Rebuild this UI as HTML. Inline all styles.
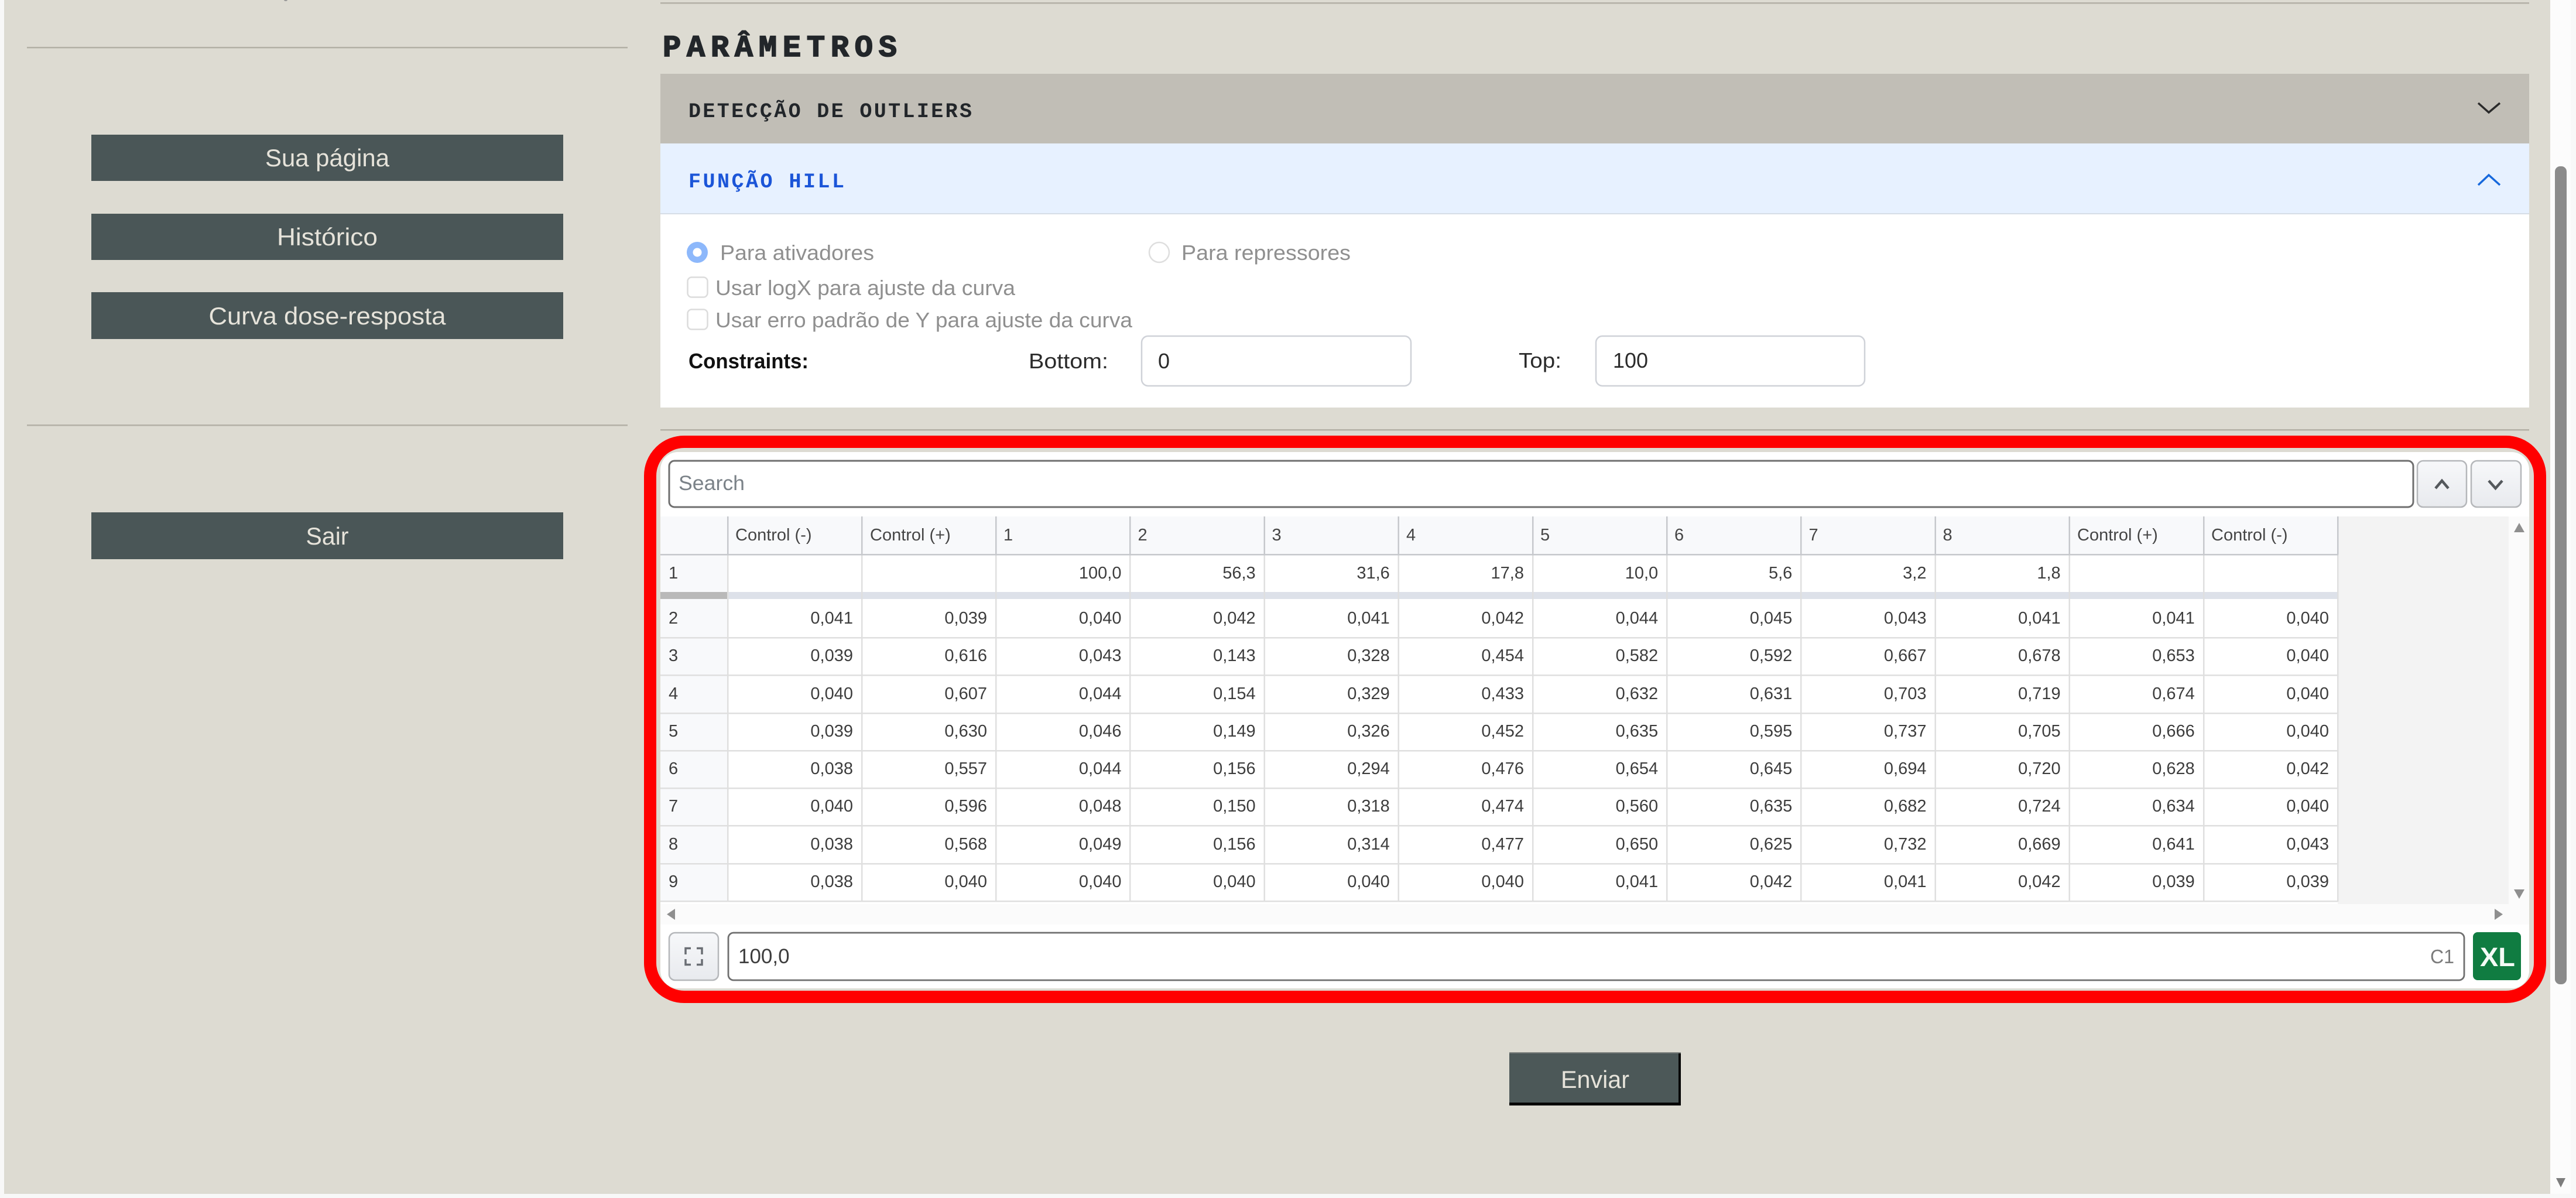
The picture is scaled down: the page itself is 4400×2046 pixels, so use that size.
<!DOCTYPE html>
<html lang="pt">
<head>
<meta charset="utf-8">
<title>Parâmetros</title>
<style>
html,body{margin:0;padding:0;width:4400px;height:2046px;overflow:hidden;background:#dddbd2}
svg{display:block}
text{font-family:"Liberation Sans",Arial,sans-serif}
.side{font-size:42px;fill:#e6e3da;text-anchor:middle}
.pix{font-family:"Liberation Mono","DejaVu Sans Mono",monospace;font-weight:700}
.lab{font-size:36px;fill:#8f8f8f}
.blk{font-size:36px;fill:#2b2b2b}
.tb{font-size:29px;fill:#3d3d3d}
.hd{font-size:29px;fill:#454545}
.num{font-size:29px;fill:#3d3d3d;text-anchor:end;transform:translateX(2px)}
</style>
</head>
<body>
<svg xmlns="http://www.w3.org/2000/svg" width="4400" height="2046" viewBox="0 0 4400 2046">
<defs>
<linearGradient id="btn" x1="0" y1="0" x2="0" y2="1"><stop offset="0" stop-color="#f7f8fa"/><stop offset="1" stop-color="#e8eaee"/></linearGradient>
</defs>
<!-- page frame -->
<rect x="0" y="0" width="4400" height="2046" fill="#f8f8f8"/>
<rect x="7" y="0" width="4349" height="2039" fill="#dddbd2"/>
<rect x="4356" y="0" width="35" height="2039" fill="#fcfcfc"/>
<rect x="4364" y="284" width="20" height="1397" rx="9" fill="#8b8b8b"/>
<path d="M4366 2012h16l-8 16z" fill="#7d7d7d"/>

<!-- sidebar -->
<ellipse cx="488" cy="0" rx="3" ry="2" fill="#999"/>
<rect x="46" y="80" width="1026" height="2.5" fill="#b3b0a6"/>
<rect x="46" y="725" width="1026" height="2.5" fill="#b3b0a6"/>
<rect x="156" y="230" width="806" height="79" fill="#4a5657"/>
<rect x="156" y="365" width="806" height="79" fill="#4a5657"/>
<rect x="156" y="499" width="806" height="80" fill="#4a5657"/>
<rect x="156" y="875" width="806" height="80" fill="#4a5657"/>
<text class="side" x="559" y="284" textLength="212" lengthAdjust="spacingAndGlyphs">Sua página</text>
<text class="side" x="559" y="419" textLength="172" lengthAdjust="spacingAndGlyphs">Histórico</text>
<text class="side" x="559" y="554" textLength="405" lengthAdjust="spacingAndGlyphs">Curva dose-resposta</text>
<text class="side" x="559" y="930" textLength="73" lengthAdjust="spacingAndGlyphs">Sair</text>

<!-- main header -->
<rect x="1128" y="4" width="3192" height="2.5" fill="#b3b0a6"/>
<text class="pix" x="1132" y="96" font-size="52" fill="#22262a" stroke="#22262a" stroke-width="1.8" textLength="400" lengthAdjust="spacing">PARÂMETROS</text>

<!-- accordion -->
<rect x="1128" y="126" width="3192" height="119" fill="#c1beb6"/>
<rect x="1128" y="245" width="3192" height="120" fill="#e7f1ff"/>
<rect x="1128" y="364" width="3192" height="2" fill="#d6dde6"/>
<rect x="1128" y="366" width="3192" height="330" fill="#ffffff"/>
<text class="pix" x="1176" y="200" font-size="35" fill="#22262a" textLength="484" lengthAdjust="spacing">DETECÇÃO DE OUTLIERS</text>
<text class="pix" x="1176" y="320" font-size="35" fill="#1b55d8" textLength="266" lengthAdjust="spacing">FUNÇÃO HILL</text>
<path d="M4233 176L4251 192L4270 176" fill="none" stroke="#2a2a2a" stroke-width="3.5"/>
<path d="M4233 316L4251 299L4270 316" fill="none" stroke="#1668dc" stroke-width="3.5"/>

<!-- form -->
<circle cx="1191" cy="431" r="18" fill="#8db8fb"/>
<circle cx="1191" cy="431" r="7.5" fill="#fff"/>
<text class="lab" x="1230" y="444" textLength="263" lengthAdjust="spacingAndGlyphs">Para ativadores</text>
<circle cx="1980" cy="431" r="17" fill="#fff" stroke="#dedede" stroke-width="2.5"/>
<text class="lab" x="2018" y="444" textLength="289" lengthAdjust="spacingAndGlyphs">Para repressores</text>
<rect x="1174.5" y="473.5" width="34" height="34" rx="7" fill="#fff" stroke="#dcdcdc" stroke-width="2.5"/>
<text class="lab" x="1222" y="504" textLength="512" lengthAdjust="spacingAndGlyphs">Usar logX para ajuste da curva</text>
<rect x="1174.5" y="528.5" width="34" height="34" rx="7" fill="#fff" stroke="#dcdcdc" stroke-width="2.5"/>
<text class="lab" x="1222" y="559" textLength="712" lengthAdjust="spacingAndGlyphs">Usar erro padrão de Y para ajuste da curva</text>
<text x="1176" y="629" font-size="36" font-weight="700" fill="#111" textLength="205" lengthAdjust="spacingAndGlyphs">Constraints:</text>
<text class="blk" x="1757" y="629" textLength="136" lengthAdjust="spacingAndGlyphs">Bottom:</text>
<rect x="1950" y="574" width="460" height="85" rx="11" fill="#fff" stroke="#cfd2d8" stroke-width="2.5"/>
<text class="blk" x="1978" y="629">0</text>
<text class="blk" x="2594" y="628" textLength="73" lengthAdjust="spacingAndGlyphs">Top:</text>
<rect x="2726" y="574" width="459" height="85" rx="11" fill="#fff" stroke="#cfd2d8" stroke-width="2.5"/>
<text class="blk" x="2755" y="628" textLength="60" lengthAdjust="spacingAndGlyphs">100</text>

<rect x="1128" y="733" width="3192" height="2.5" fill="#b3b0a6"/>

<!-- spreadsheet panel -->
<rect x="1128" y="772" width="3192" height="916" rx="30" fill="#ffffff"/>

<!-- search row -->
<rect x="1143" y="787" width="2979" height="79" rx="9" fill="#fff" stroke="#6f6f6f" stroke-width="3"/>
<text x="1159" y="837" font-size="35" fill="#7b8288" textLength="113" lengthAdjust="spacingAndGlyphs">Search</text>
<rect x="4129" y="787" width="84" height="79" rx="10" fill="url(#btn)" stroke="#b5b7ba" stroke-width="2.5"/>
<rect x="4221" y="787" width="85" height="79" rx="10" fill="url(#btn)" stroke="#b5b7ba" stroke-width="2.5"/>
<path d="M4160 834L4171 821L4182 834" fill="none" stroke="#54585c" stroke-width="4.5"/>
<path d="M4251 821L4262.500 834L4274 821" fill="none" stroke="#54585c" stroke-width="4.5"/>

<!-- grid background -->
<rect x="3993" y="882" width="292" height="662" fill="#f3f3f3"/>
<rect x="4285" y="882" width="35" height="697" fill="#fbfbfb"/>
<rect x="1128" y="1544" width="3157" height="35" fill="#fbfbfb"/>
<path d="M4303 893l9 16h-18z" fill="#8f8f8f"/>
<path d="M4303 1535l-9 -16h18z" fill="#8f8f8f"/>
<path d="M1139 1561.500l14 -9.500v19z" fill="#8f8f8f"/>
<path d="M4275 1561.500l-14 -9.500v19z" fill="#8f8f8f"/>

<!-- grid -->
<rect x="1128" y="882" width="2865" height="65" fill="#f8f9fb"/>
<rect x="1128" y="947" width="115" height="592" fill="#f8f9fb"/>
<rect x="1243" y="947" width="2750" height="592" fill="#ffffff"/>
<rect x="1128" y="1011" width="115" height="12" fill="#b9b9b9"/>
<rect x="1243" y="1011" width="2750" height="12" fill="#dde1e9"/>
<g fill="#dfdfdf">
<rect x="1128" y="1088" width="2865" height="2.500"/>
<rect x="1128" y="1152" width="2865" height="2.500"/>
<rect x="1128" y="1217" width="2865" height="2.500"/>
<rect x="1128" y="1281" width="2865" height="2.500"/>
<rect x="1128" y="1345" width="2865" height="2.500"/>
<rect x="1128" y="1409" width="2865" height="2.500"/>
<rect x="1128" y="1474" width="2865" height="2.500"/>
<rect x="1128" y="1538" width="2865" height="2.500"/>
<rect x="1242" y="947" width="2.500" height="593"/>
<rect x="1471" y="947" width="2.500" height="593"/>
<rect x="1700" y="947" width="2.500" height="593"/>
<rect x="1929" y="947" width="2.500" height="593"/>
<rect x="2158.500" y="947" width="2.500" height="593"/>
<rect x="2387.500" y="947" width="2.500" height="593"/>
<rect x="2617" y="947" width="2.500" height="593"/>
<rect x="2846" y="947" width="2.500" height="593"/>
<rect x="3075" y="947" width="2.500" height="593"/>
<rect x="3304.500" y="947" width="2.500" height="593"/>
<rect x="3533.500" y="947" width="2.500" height="593"/>
<rect x="3763" y="947" width="2.500" height="593"/>
<rect x="3992" y="947" width="2.500" height="593"/>
</g>
<g fill="#c6c8cc">
<rect x="1128" y="946" width="2866" height="2.500"/>
<rect x="1242" y="882" width="2.500" height="65"/>
<rect x="1471" y="882" width="2.500" height="65"/>
<rect x="1700" y="882" width="2.500" height="65"/>
<rect x="1929" y="882" width="2.500" height="65"/>
<rect x="2158.500" y="882" width="2.500" height="65"/>
<rect x="2387.500" y="882" width="2.500" height="65"/>
<rect x="2617" y="882" width="2.500" height="65"/>
<rect x="2846" y="882" width="2.500" height="65"/>
<rect x="3075" y="882" width="2.500" height="65"/>
<rect x="3304.500" y="882" width="2.500" height="65"/>
<rect x="3533.500" y="882" width="2.500" height="65"/>
<rect x="3763" y="882" width="2.500" height="65"/>
<rect x="3992" y="882" width="2.500" height="65"/>
</g>

<!-- grid header -->
<text class="hd" y="923">
<tspan x="1256">Control (-)</tspan><tspan x="1486">Control (+)</tspan><tspan x="1714">1</tspan><tspan x="1943.500">2</tspan><tspan x="2172.500">3</tspan><tspan x="2402">4</tspan><tspan x="2631">5</tspan><tspan x="2860">6</tspan><tspan x="3089.500">7</tspan><tspan x="3318.500">8</tspan><tspan x="3548">Control (+)</tspan><tspan x="3777">Control (-)</tspan>
</text>

<!-- row labels -->
<g class="tb">
<text class="tb" x="1142" y="988">1</text>
<text class="tb" x="1142" y="1065">2</text>
<text class="tb" x="1142" y="1129">3</text>
<text class="tb" x="1142" y="1194">4</text>
<text class="tb" x="1142" y="1258">5</text>
<text class="tb" x="1142" y="1322">6</text>
<text class="tb" x="1142" y="1386">7</text>
<text class="tb" x="1142" y="1451">8</text>
<text class="tb" x="1142" y="1515">9</text>
</g>

<!-- rows -->
<text class="num" y="988"><tspan x="1913.500">100,0</tspan><tspan x="2142.700">56,3</tspan><tspan x="2371.800">31,6</tspan><tspan x="2601">17,8</tspan><tspan x="2830.200">10,0</tspan><tspan x="3059.300">5,6</tspan><tspan x="3288.500">3,2</tspan><tspan x="3517.700">1,8</tspan></text>
<text class="num" y="1065"><tspan x="1455">0,041</tspan><tspan x="1684">0,039</tspan><tspan x="1913.500">0,040</tspan><tspan x="2142.700">0,042</tspan><tspan x="2371.800">0,041</tspan><tspan x="2601">0,042</tspan><tspan x="2830.200">0,044</tspan><tspan x="3059.300">0,045</tspan><tspan x="3288.500">0,043</tspan><tspan x="3517.700">0,041</tspan><tspan x="3746.800">0,041</tspan><tspan x="3976">0,040</tspan></text>
<text class="num" y="1129"><tspan x="1455">0,039</tspan><tspan x="1684">0,616</tspan><tspan x="1913.500">0,043</tspan><tspan x="2142.700">0,143</tspan><tspan x="2371.800">0,328</tspan><tspan x="2601">0,454</tspan><tspan x="2830.200">0,582</tspan><tspan x="3059.300">0,592</tspan><tspan x="3288.500">0,667</tspan><tspan x="3517.700">0,678</tspan><tspan x="3746.800">0,653</tspan><tspan x="3976">0,040</tspan></text>
<text class="num" y="1194"><tspan x="1455">0,040</tspan><tspan x="1684">0,607</tspan><tspan x="1913.500">0,044</tspan><tspan x="2142.700">0,154</tspan><tspan x="2371.800">0,329</tspan><tspan x="2601">0,433</tspan><tspan x="2830.200">0,632</tspan><tspan x="3059.300">0,631</tspan><tspan x="3288.500">0,703</tspan><tspan x="3517.700">0,719</tspan><tspan x="3746.800">0,674</tspan><tspan x="3976">0,040</tspan></text>
<text class="num" y="1258"><tspan x="1455">0,039</tspan><tspan x="1684">0,630</tspan><tspan x="1913.500">0,046</tspan><tspan x="2142.700">0,149</tspan><tspan x="2371.800">0,326</tspan><tspan x="2601">0,452</tspan><tspan x="2830.200">0,635</tspan><tspan x="3059.300">0,595</tspan><tspan x="3288.500">0,737</tspan><tspan x="3517.700">0,705</tspan><tspan x="3746.800">0,666</tspan><tspan x="3976">0,040</tspan></text>
<text class="num" y="1322"><tspan x="1455">0,038</tspan><tspan x="1684">0,557</tspan><tspan x="1913.500">0,044</tspan><tspan x="2142.700">0,156</tspan><tspan x="2371.800">0,294</tspan><tspan x="2601">0,476</tspan><tspan x="2830.200">0,654</tspan><tspan x="3059.300">0,645</tspan><tspan x="3288.500">0,694</tspan><tspan x="3517.700">0,720</tspan><tspan x="3746.800">0,628</tspan><tspan x="3976">0,042</tspan></text>
<text class="num" y="1386"><tspan x="1455">0,040</tspan><tspan x="1684">0,596</tspan><tspan x="1913.500">0,048</tspan><tspan x="2142.700">0,150</tspan><tspan x="2371.800">0,318</tspan><tspan x="2601">0,474</tspan><tspan x="2830.200">0,560</tspan><tspan x="3059.300">0,635</tspan><tspan x="3288.500">0,682</tspan><tspan x="3517.700">0,724</tspan><tspan x="3746.800">0,634</tspan><tspan x="3976">0,040</tspan></text>
<text class="num" y="1451"><tspan x="1455">0,038</tspan><tspan x="1684">0,568</tspan><tspan x="1913.500">0,049</tspan><tspan x="2142.700">0,156</tspan><tspan x="2371.800">0,314</tspan><tspan x="2601">0,477</tspan><tspan x="2830.200">0,650</tspan><tspan x="3059.300">0,625</tspan><tspan x="3288.500">0,732</tspan><tspan x="3517.700">0,669</tspan><tspan x="3746.800">0,641</tspan><tspan x="3976">0,043</tspan></text>
<text class="num" y="1515"><tspan x="1455">0,038</tspan><tspan x="1684">0,040</tspan><tspan x="1913.500">0,040</tspan><tspan x="2142.700">0,040</tspan><tspan x="2371.800">0,040</tspan><tspan x="2601">0,040</tspan><tspan x="2830.200">0,041</tspan><tspan x="3059.300">0,042</tspan><tspan x="3288.500">0,041</tspan><tspan x="3517.700">0,042</tspan><tspan x="3746.800">0,039</tspan><tspan x="3976">0,039</tspan></text>

<!-- bottom row -->
<rect x="1143" y="1593" width="84" height="81" rx="10" fill="url(#btn)" stroke="#b5b7ba" stroke-width="2.500"/>
<path d="M1171 1630v-10.500h9M1190 1619.500h9v10.500M1171 1638v9.500h9M1190 1647.500h9v-9.500" fill="none" stroke="#6a6e74" stroke-width="3.500"/>
<rect x="1244" y="1593" width="2965" height="81" rx="9" fill="#fff" stroke="#6f6f6f" stroke-width="2.800"/>
<text x="1261" y="1645" font-size="35" fill="#3d3d3d">100,0</text>
<text x="4151" y="1645" font-size="33" fill="#7b7b7b" textLength="41" lengthAdjust="spacingAndGlyphs">C1</text>
<rect x="4224" y="1592" width="82" height="82" rx="8" fill="#107c41"/>
<text x="4236" y="1650" font-size="45" font-weight="700" fill="#f4fbf6" textLength="60" lengthAdjust="spacingAndGlyphs">XL</text>

<!-- red highlight -->
<rect x="1110.500" y="754.500" width="3228" height="948" rx="58" fill="none" stroke="#ff0000" stroke-width="21"/>

<!-- submit -->
<rect x="2578" y="1798" width="293" height="90" fill="#050505"/>
<rect x="2578" y="1798" width="289" height="85" fill="#4c5858"/>
<rect x="2578" y="1797" width="293" height="2" fill="#7a7f7c"/>
<text x="2666" y="1858" font-size="42" fill="#e6e3da" textLength="117" lengthAdjust="spacingAndGlyphs">Enviar</text>
</svg>
</body>
</html>
